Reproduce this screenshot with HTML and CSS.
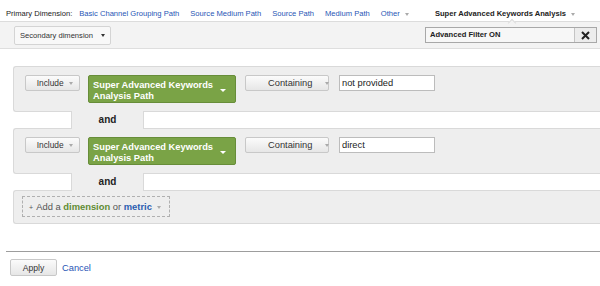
FILE: index.html
```html
<!DOCTYPE html>
<html lang="en">
<head>
    <meta charset="UTF-8">
    <title>Advanced Filter</title>
    <link rel="stylesheet" href="styles.css">
</head>
<body>

<div class="dimbar">
    <span class="dim-label">Primary Dimension:</span>
    <a class="dim-link" href="#">Basic Channel Grouping Path</a>
    <a class="dim-link" href="#">Source Medium Path</a>
    <a class="dim-link" href="#">Source Path</a>
    <a class="dim-link" href="#">Medium Path</a>
    <a class="dim-link" href="#">Other <span class="caret"></span></a>
    <span class="dim-active">Super Advanced Keywords Analysis <span class="caret"></span></span>
</div>

<div class="toolbar">
    <button class="btn secondary">Secondary dimension <span class="caret dark"></span></button>
    <div class="filter-on">
        <span class="filter-on-text">Advanced Filter ON</span>
        <span class="filter-close">
            <svg width="9" height="9" viewBox="0 0 9 9"><path d="M1 1L8 8M8 1L1 8" stroke="#222" stroke-width="2"/></svg>
        </span>
    </div>
</div>

<div class="filters">
    <div class="panel">
        <button class="btn include">Include <span class="caret"></span></button>
        <div class="dim-select">Super Advanced Keywords Analysis Path <span class="caret white"></span></div>
        <button class="btn match">Containing <span class="caret"></span></button>
        <input class="value" type="text" value="not provided">
    </div>
    <div class="and-row"><span class="and">and</span></div>
    <div class="panel">
        <button class="btn include">Include <span class="caret"></span></button>
        <div class="dim-select">Super Advanced Keywords Analysis Path <span class="caret white"></span></div>
        <button class="btn match">Containing <span class="caret"></span></button>
        <input class="value" type="text" value="direct">
    </div>
    <div class="and-row"><span class="and">and</span></div>
    <div class="panel add-panel">
        <div class="add-box">
            <span class="plus">+</span> Add a <b class="green">dimension</b> or <b class="blue">metric</b> <span class="caret"></span>
        </div>
    </div>
</div>

<div class="footer">
    <button class="btn apply">Apply</button>
    <a class="cancel" href="#">Cancel</a>
</div>

</body>
</html>
```

FILE: styles.css
```css
body {
    margin: 0;
    font-family: "Liberation Sans", Arial, sans-serif;
    color: #222;
    background-color: #fff;
    overflow: hidden;
}
a {
    text-decoration: none;
}
.caret {
    display: inline-block;
    width: 0;
    height: 0;
    border-left: 2.5px solid transparent;
    border-right: 2.5px solid transparent;
    border-top: 3px solid #aaa;
    vertical-align: middle;
    margin-left: 3px;
}
.caret.dark {
    border-top-color: #333;
    margin-left: 6px;
}
.caret.white {
    border-left-width: 3px;
    border-right-width: 3px;
    border-top: 3px solid #fff;
    margin-left: 0;
}

/* primary dimension bar */
.dimbar {
    position: relative;
    height: 22px;
    display: flex;
    align-items: center;
    padding: 6px 0 0 6px;
    box-sizing: border-box;
    font-size: 7.6px;
    border-bottom: 1px solid #dcdcdc;
}
.dim-label {
    color: #222;
    margin-right: 7px;
}
.dim-link {
    color: #1f55b5;
    margin-right: 11px;
}
.dim-active {
    position: relative;
    font-weight: bold;
    color: #222;
    margin-left: 15px;
}
.dim-active::after {
    content: "";
    position: absolute;
    left: 74px;
    bottom: -8px;
    width: 5px;
    height: 5px;
    background-color: #f3f3f3;
    border-top: 1px solid #dcdcdc;
    border-left: 1px solid #dcdcdc;
    transform: rotate(45deg);
}

/* toolbar */
.toolbar {
    height: 26px;
    display: flex;
    align-items: center;
    background-color: #f3f3f3;
    border-bottom: 1px solid #dedede;
    padding: 0 3px 0 14px;
}
.btn {
    font-family: "Liberation Sans", Arial, sans-serif;
    background: linear-gradient(#fbfbfb, #e6e6e6);
    border: 1px solid #c8c8c8;
    border-radius: 2px;
    color: #333;
    padding: 0;
    white-space: nowrap;
    cursor: pointer;
}
.secondary {
    width: 97px;
    height: 19px;
    font-size: 7.6px;
    text-align: left;
    padding-left: 5px;
    background: #f8f8f8;
    border-color: #d4d4d4;
}
.filter-on {
    margin-left: auto;
    width: 172px;
    height: 16px;
    display: flex;
    border: 1px solid #a8a8a8;
    background-color: #f7f7f7;
    box-sizing: border-box;
}
.filter-on-text {
    flex: 1;
    font-size: 7.6px;
    font-weight: bold;
    line-height: 14px;
    padding-left: 4px;
}
.filter-close {
    width: 21px;
    border-left: 1px solid #c4c4c4;
    background-color: #ececec;
    display: flex;
    align-items: center;
    justify-content: center;
}

/* filter panels */
.filters {
    margin: 17px 0 0 13px;
}
.panel {
    display: flex;
    align-items: flex-start;
    background-color: #eeeeee;
    border: 1px solid #d9d9d9;
    border-right: none;
    border-radius: 3px 0 0 3px;
    padding: 8px 0 8px 11px;
}
.include {
    width: 55px;
    height: 16px;
    font-size: 8.4px;
    text-align: right;
    padding-right: 6px;
}
.dim-select {
    width: 148px;
    height: 28px;
    box-sizing: border-box;
    margin-left: 8px;
    background-color: #7aa346;
    border: 1px solid #678d39;
    border-radius: 2px;
    color: #fff;
    font-size: 9.3px;
    font-weight: bold;
    line-height: 11px;
    padding: 3px 4px 0 4px;
    display: flex;
    align-items: center;
    justify-content: space-between;
}
.dim-select .caret {
    flex: none;
    margin-right: 5px;
}
.match {
    width: 84px;
    height: 16px;
    margin-left: 9px;
    font-size: 9.3px;
    text-align: left;
    padding-left: 22px;
}
.match .caret {
    margin-left: 10px;
}
.value {
    width: 96px;
    height: 16px;
    box-sizing: border-box;
    margin: 0 0 0 10px;
    border: 1px solid #bcbcbc;
    background-color: #fff;
    font-family: "Liberation Sans", Arial, sans-serif;
    font-size: 9.3px;
    padding: 0 0 0 2px;
    color: #222;
}
.and-row {
    height: 16px;
    display: flex;
}
.and {
    position: relative;
    width: 71px;
    margin: -1px 0 -1px 58px;
    background-color: #eeeeee;
    border-left: 1px solid #d9d9d9;
    border-right: 1px solid #d9d9d9;
    font-size: 10px;
    font-weight: bold;
    text-align: center;
    line-height: 18px;
}
.add-panel {
    padding: 5px 0 6px 8px;
}
.add-box {
    width: 148px;
    height: 21px;
    box-sizing: border-box;
    border: 1px dashed #b0b0b0;
    font-size: 9.4px;
    color: #555;
    line-height: 19px;
    padding-left: 6px;
}
.plus {
    font-size: 7px;
    margin-right: 1px;
}
.green {
    color: #5f8c33;
}
.blue {
    color: #2a5db0;
}

/* footer */
.footer {
    margin: 27px 0 0 6px;
    border-top: 1px solid #9d9d9d;
    box-shadow: 0 1px 0 #dadada;
    padding: 7px 0 0 4px;
    display: flex;
    align-items: center;
}
.apply {
    width: 47px;
    height: 17px;
    font-size: 8.6px;
}
.cancel {
    margin-left: 5px;
    color: #1f55b5;
    font-size: 9.3px;
}
```
